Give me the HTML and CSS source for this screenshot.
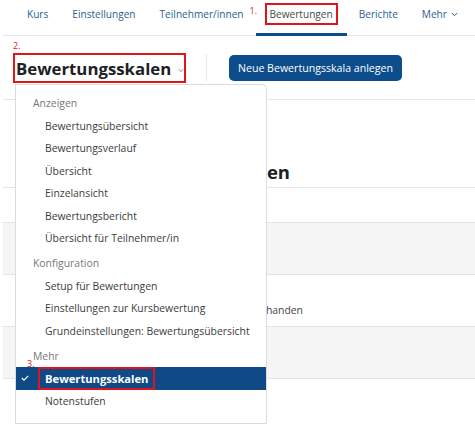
FILE: index.html
```html
<!DOCTYPE html>
<html lang="de">
<head>
<meta charset="utf-8">
<title>Bewertungsskalen</title>
<link rel="stylesheet" href="styles.css">
</head>
<body>
<div class="page">
  <nav class="tabs">
    <a class="tab">Kurs</a>
    <a class="tab">Einstellungen</a>
    <a class="tab">Teilnehmer/innen</a>
    <a class="tab active"><span class="mark mark-1">1.</span><span class="boxed">Bewertungen</span></a>
    <a class="tab">Berichte</a>
    <a class="tab">Mehr <svg class="chev" width="7" height="5" viewBox="0 0 7 5"><path d="M0.8 1l2.7 2.7L6.2 1" fill="none" stroke="#2b5f8f" stroke-width="1"/></svg></a>
  </nav>

  <div class="toolbar">
    <div class="selector">
      <span class="mark mark-2">2.</span>
      <div class="selector-box">
        <span class="selector-title">Bewertungsskalen</span>
        <svg class="selector-chev" width="7" height="5" viewBox="0 0 7 5"><path d="M0.8 1l2.7 2.7L6.2 1" fill="none" stroke="#6b7280" stroke-width="1"/></svg>
      </div>
    </div>
    <div class="divider"></div>
    <button class="btn">Neue Bewertungsskala anlegen</button>
  </div>

  <div class="content">
    <h2 class="heading">Kursbezogene Skalen</h2>
    <div class="table">
      <div class="row row-head"></div>
      <div class="row row-gray"></div>
      <div class="row row-text"><span>Keine Skalen vorhanden</span></div>
      <div class="row row-gray"></div>
    </div>
  </div>

  <div class="menu">
    <div class="menu-head">Anzeigen</div>
    <div class="menu-item">Bewertungsübersicht</div>
    <div class="menu-item">Bewertungsverlauf</div>
    <div class="menu-item">Übersicht</div>
    <div class="menu-item">Einzelansicht</div>
    <div class="menu-item">Bewertungsbericht</div>
    <div class="menu-item">Übersicht für Teilnehmer/in</div>
    <div class="menu-head">Konfiguration</div>
    <div class="menu-item">Setup für Bewertungen</div>
    <div class="menu-item">Einstellungen zur Kursbewertung</div>
    <div class="menu-item">Grundeinstellungen: Bewertungsübersicht</div>
    <div class="menu-head">Mehr<span class="mark mark-3">3.</span></div>
    <div class="menu-item selected">
      <svg class="check" width="8" height="6" viewBox="0 0 8 6"><path d="M0.8 3l2.2 2.1L7.2 0.8" fill="none" stroke="#fff" stroke-width="1.2"/></svg>
      <span class="boxed-sel">Bewertungsskalen</span>
    </div>
    <div class="menu-item">Notenstufen</div>
  </div>
</div>
</body>
</html>
```

FILE: styles.css
```css
* { box-sizing: border-box; }
html, body { margin: 0; padding: 0; background: #fff; }
body {
  font-family: "Open Sans", "Noto Sans", sans-serif;
  font-size: 10.4px;
  color: #333;
  width: 475px;
  height: 426px;
  overflow: hidden;
}
.page { position: relative; height: 426px; padding-left: 3px; }

.tabs {
  display: flex;
  height: 36px;
  padding-left: 12px;
  border-bottom: 1px solid #e3e5e8;
  font-size: 10.1px;
}
.tab {
  position: relative;
  display: flex;
  align-items: center;
  height: 35px;
  padding: 0 12px 7px;
  color: #2b5f8f;
  white-space: nowrap;
}
.tab.active { color: #4a4a4a; }
.tab.active::after {
  content: "";
  position: absolute;
  left: 0; right: 0; bottom: -1px;
  height: 3px;
  background: #0f4c8a;
}
.boxed {
  outline: 2px solid #e0141b;
  outline-offset: 1px;
  padding: 1px 2px;
}
.chev { margin-left: 4px; margin-top: 1px; }

.mark { color: #e0141b; font-size: 9px; }
.mark-1 { position: absolute; left: -6px; top: 4px; }

.toolbar {
  display: flex;
  align-items: flex-start;
  height: 64px;
  padding: 17px 0 0 10px;
  border-bottom: 1px solid #e6e6e6;
}
.selector { position: relative; }
.mark-2 { position: absolute; left: 0; top: -14px; }
.selector-box {
  display: flex;
  align-items: center;
  height: 30px;
  width: 173px;
  padding-left: 1px;
  border: 2px solid #e0141b;
}
.selector-title {
  font-size: 16.8px;
  font-weight: 700;
  color: #1d2125;
  white-space: nowrap;
}
.selector-chev { margin-left: 7px; margin-top: 4px; }
.divider {
  width: 1px;
  height: 27px;
  background: #e6e6e6;
  margin: 1px 22px 0 20px;
}
.btn {
  height: 26px;
  padding: 0 9px;
  border: 0;
  border-radius: 5px;
  background: #0d4d8c;
  color: #fff;
  font-family: inherit;
  font-size: 10.6px;
  margin-top: 2px;
  white-space: nowrap;
}

.content { padding-top: 57px; }
.heading {
  margin: 0;
  width: 287px;
  text-align: right;
  font-size: 18.5px;
  font-weight: 700;
  color: #1d2125;
  height: 30px;
  line-height: 30px;
  white-space: nowrap;
}
.table { border-top: 1px solid #e3e5e8; }
.row { height: 52px; border-bottom: 1px solid #e3e5e8; }
.row-head { height: 35px; }
.row-gray { background: #f5f5f5; }
.row-text { display: flex; align-items: flex-end; padding-bottom: 9px; color: #444; }
.row-text span { width: 300px; text-align: right; white-space: nowrap; }

.menu {
  position: absolute;
  left: 15px;
  top: 84px;
  width: 252px;
  height: 340px;
  padding-top: 7px;
  background: #fff;
  border: 1px solid #dcdcdc;
  border-radius: 0 5px 0 0;
}
.menu-head {
  position: relative;
  height: 22.5px;
  line-height: 22.5px;
  padding-left: 17px;
  color: #777;
  margin-top: 2.5px;
}
.menu-head:first-child { margin-top: 0; }
.menu-item {
  position: relative;
  height: 22.5px;
  line-height: 22.5px;
  padding-left: 29px;
  color: #3c3c3c;
  white-space: nowrap;
}
.mark-3 { position: absolute; left: 11px; top: 8px; }
.selected {
  background: #0f4a87;
  color: #fff;
  font-weight: 700;
  font-size: 11.2px;
  display: flex;
  align-items: center;
  padding-left: 22px;
}
.check { position: absolute; left: 5px; top: 8px; }
.boxed-sel {
  border: 2px solid #e0141b;
  height: 23px;
  line-height: 19px;
  padding: 0 5px;
}
```
